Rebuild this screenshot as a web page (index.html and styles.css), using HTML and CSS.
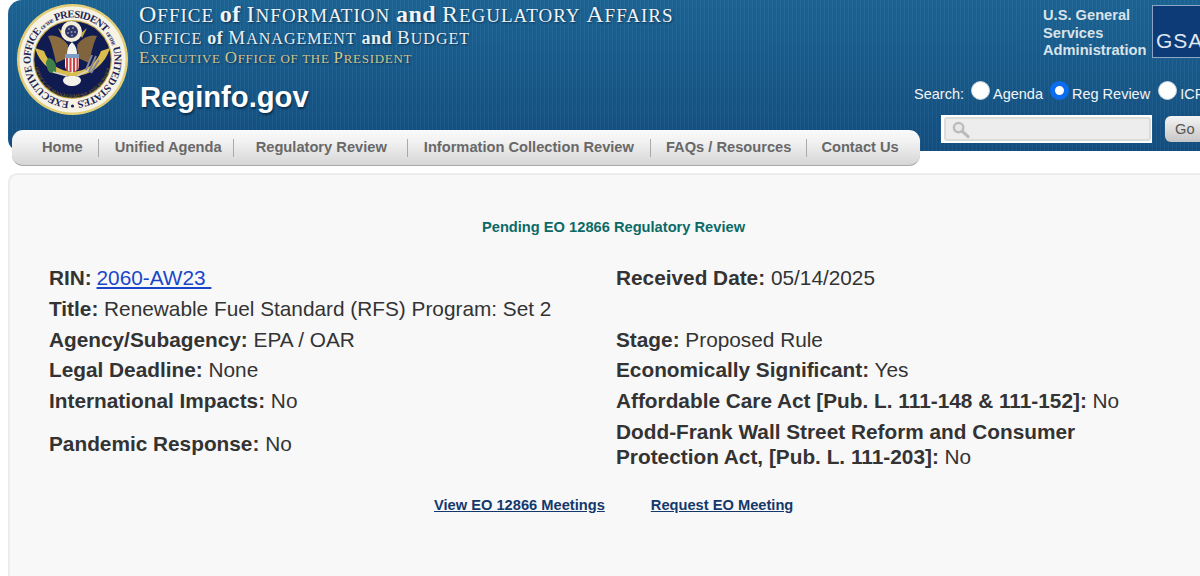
FILE: index.html
```html
<!DOCTYPE html>
<html lang="en">
<head>
<meta charset="utf-8">
<title>Reginfo.gov</title>
<link rel="stylesheet" href="styles.css">
</head>
<body>
<header class="banner">
  <div class="brand">
    <svg class="seal" viewBox="0 0 111 111" aria-label="Seal of the Executive Office of the President">
      <defs>
        <path id="ringText" d="M53 97.400A42 42 0 1 1 58 97.400"/>
        <path id="bandText" d="M17 55.500A38.500 38.500 0 0 0 94 55.500"/>
      </defs>
      <circle cx="55.500" cy="55.500" r="55.500" fill="#e3cf78"/>
      <circle cx="55.500" cy="55.500" r="53" fill="#f6f3e6"/>
      <text class="seal-ring"><textPath href="#ringText" startOffset="1" textLength="255">EXECUTIVE OFFICE <tspan class="seal-small">OF THE</tspan> PRESIDENT <tspan class="seal-small">OF THE</tspan> UNITED STATES</textPath></text>
      <circle cx="55.500" cy="102" r="1.600" fill="#1a2050"/>
      <circle cx="55.500" cy="55.500" r="39.500" fill="#c9ad4c"/>
      <circle cx="55.500" cy="55.500" r="38.300" fill="#101b52"/>
      <path d="M18 44A39 39 0 0 0 93 44L84 47A30 30 0 0 1 27 47Z" fill="#d8bc4e"/>
      <text class="seal-band"><textPath href="#bandText" startOffset="8" textLength="104">OFFICE OF MANAGEMENT AND BUDGET</textPath></text>
      <path d="M41 24L48 30L46 34ZM70 24L63 30L65 34Z" fill="#c7a847"/>
      <path d="M31 32C38 30 46 34 51 41L50 54L39 59C37 50 35 40 31 32Z" fill="#8a6b40"/>
      <path d="M80 32C73 30 65 34 60 41L61 54L72 59C74 50 76 40 80 32Z" fill="#80643d"/>
      <circle cx="54.500" cy="27.500" r="10.500" fill="#f3efdc"/>
      <circle cx="54.500" cy="27.500" r="6.500" fill="#2d3464"/>
      <g fill="#8f93b4"><circle cx="52" cy="25" r="1"/><circle cx="56" cy="24" r="1"/><circle cx="58" cy="28" r="1"/><circle cx="54.500" cy="28" r="1"/><circle cx="51" cy="29" r="1"/><circle cx="55" cy="31.500" r="1"/></g>
      <path d="M50 50C50 44 52 41 55 38C58 41 60 44 60 50Z" fill="#f4f4f0"/>
      <path d="M48 50H62V62C62 66 58 67 55 69C52 67 48 66 48 62Z" fill="#f1eee8"/>
      <path d="M48 50H62V54H48Z" fill="#7b9fc4"/>
      <path d="M49 54H51V66.500H49ZM52.500 54H54.500V68H52.500ZM56 54H58V68H56ZM59.500 54H61.500V66H59.500Z" fill="#c9434b"/>
      <path d="M32 54C37 55 40 60 39 68C35 71 30 68 30 62C28 60 29 56 32 54Z" fill="#3d7f46"/>
      <path d="M36 68L50 72" stroke="#d5d3c8" stroke-width="1.500"/>
      <path d="M60 72L72 66" stroke="#d5d3c8" stroke-width="1.500"/>
      <path d="M72 68L79 52M69 66L75 51M74 69L82 56" stroke="#85869c" stroke-width="2"/>
      <path d="M46 76C47 72 51 72 55 72C59 72 63 72 64 76C64 80 59 82 55 82C51 82 46 80 46 76Z" fill="#f3f2ea"/>
    </svg>
    <div class="titles">
      <p class="title-main"><span class="w">Office</span> <span class="lc">of</span> <span class="w">Information</span> <span class="lc">and</span> <span class="w">Regulatory</span> <span class="w">Affairs</span></p>
      <p class="title-sub"><span class="w">Office</span> <span class="lc">of</span> <span class="w">Management</span> <span class="lc">and</span> <span class="w">Budget</span></p>
      <p class="title-exec"><span class="w">Executive</span> <span class="w">Office</span> <span class="sc">of the</span> <span class="w">President</span></p>
      <p class="site-name">Reginfo.gov</p>
    </div>
  </div>
  <div class="tools">
    <div class="gsa">
      <span class="gsa-name">U.S. General<br>Services<br>Administration</span>
      <span class="gsa-logo">GSA</span>
    </div>
    <form class="search-types">
      <span>Search:</span>
      <label class="choice"><input type="radio" name="scope" class="radio">Agenda</label>
      <label class="choice"><input type="radio" name="scope" class="radio" checked>Reg Review</label>
      <label class="choice"><input type="radio" name="scope" class="radio">ICR</label>
    </form>
    <div class="search-box">
      <div class="search-field">
        <input type="text" class="search-input" aria-label="Search">
        <svg class="search-icon" viewBox="0 0 20 20"><circle cx="8" cy="8" r="5" fill="#e8e8e8" stroke="#bbb" stroke-width="2.500"/><path d="M12 12L18 17.500" stroke="#bbb" stroke-width="3.200" stroke-linecap="round"/></svg>
      </div>
      <button type="button" class="go">Go</button>
    </div>
  </div>
  <nav class="nav">
    <a class="nav-home">Home</a>
    <a class="nav-agenda">Unified Agenda</a>
    <a class="nav-review">Regulatory Review</a>
    <a class="nav-info">Information Collection Review</a>
    <a class="nav-faq">FAQs / Resources</a>
    <a class="nav-contact">Contact Us</a>
  </nav>
</header>
<main class="panel">
  <h1 class="heading">Pending EO 12866 Regulatory Review</h1>
  <div class="facts">
    <div><b>RIN:</b> <a class="rin" href="#">2060-AW23&nbsp;</a></div>
    <div><b>Received Date:</b> 05/14/2025</div>
    <div><b>Title:</b> Renewable Fuel Standard (RFS) Program: Set 2</div>
    <div></div>
    <div><b>Agency/Subagency:</b> EPA / OAR</div>
    <div><b>Stage:</b> Proposed Rule</div>
    <div><b>Legal Deadline:</b> None</div>
    <div><b>Economically Significant:</b> Yes</div>
    <div><b>International Impacts:</b> No</div>
    <div><b>Affordable Care Act [Pub. L. 111-148 &amp; 111-152]:</b> No</div>
    <div class="fact-mid"><b>Pandemic Response:</b> No</div>
    <div class="fact-wrap"><b>Dodd-Frank Wall Street Reform and Consumer Protection Act, [Pub. L. 111-203]:</b> No</div>
  </div>
  <div class="links">
    <a href="#">View EO 12866 Meetings</a>
    <a href="#">Request EO Meeting</a>
  </div>
</main>
</body>
</html>
```
FILE: styles.css
```css
* { box-sizing: border-box; }
html, body { margin: 0; height: 576px; overflow: hidden; background: #fff; }
body { font-family: "Liberation Sans", Arial, sans-serif; color: #333; }
p { margin: 0; }

.banner {
  margin-left: 8px;
  height: 151px;
  display: grid;
  grid-template-columns: 906px 286px;
  grid-template-rows: 130px 21px;
  border-radius: 14px 0 0 12px;
  background:
    repeating-linear-gradient(90deg, rgba(255,255,255,.045) 0 1px, rgba(0,0,0,.02) 1px 2px, transparent 2px 4px),
    linear-gradient(#1b6393, #134e7f);
}
.brand { display: flex; align-items: flex-start; }
.seal { width: 111px; height: 111px; margin: 4px 0 0 9px; flex: none; }
.seal-ring { font: bold 10.500px "Liberation Serif", serif; fill: #1c2355; }
.seal-small { font-size: 5px; }
.seal-band { font: bold 5px "Liberation Serif", serif; fill: #6b5a1c; }
.titles { margin-left: 11px; }
.title-main, .title-sub, .title-exec { font-family: "Liberation Serif", serif; white-space: nowrap; }
.w { display: inline-block; text-transform: uppercase; }
.lc { font-weight: bold; }
.sc { text-transform: uppercase; }
.title-main { margin-top: 2px; font-size: 19px; line-height: 25px; letter-spacing: 1px; color: #f1f4f6; text-shadow: 1px 1px 2px #0b3354; }
.title-main .w::first-letter { font-size: 24px; }
.title-main .lc { font-size: 24px; letter-spacing: .5px; }
.title-sub { font-size: 16px; line-height: 20px; letter-spacing: 1px; color: #e8eef2; text-shadow: 1px 1px 2px #0b3354; }
.title-sub .w::first-letter { font-size: 19px; }
.title-sub .lc { font-size: 18px; letter-spacing: .5px; }
.title-exec { font-size: 13px; line-height: 18px; letter-spacing: .7px; color: #cfc68e; text-shadow: 1px 1px 2px #0b3354; }
.title-exec .w::first-letter { font-size: 17px; }
.site-name { margin: 11px 0 0 1px; font-weight: bold; font-size: 29.200px; line-height: 36px; color: #fff; text-shadow: 1px 2px 2px #0a2f4e; }

.tools { grid-row: 1 / 3; grid-column: 2; overflow: hidden; white-space: nowrap; color: #fff; }
.gsa { display: flex; padding: 5px 0 0 129px; width: 400px; }
.gsa-name { margin-top: 2px; width: 109px; font-weight: bold; font-size: 14.670px; line-height: 17.500px; color: #d9e3ea; }
.gsa-logo { width: 60px; height: 53px; padding: 23px 0 0 3px; border: 1px solid #8aa6c2; background: #0d3b78; font-size: 21px; line-height: 24px; letter-spacing: 1px; color: #dfe8f0; }
.search-types { display: flex; align-items: center; width: 400px; height: 20px; margin-top: 24px; font-size: 14.500px; color: #f2f5f7; }
.choice { display: flex; align-items: center; }
.radio { appearance: none; width: 19px; height: 19px; margin: -6px 3px 0 7px; border-radius: 50%; background: #fff; border: 1px solid #c8d4dc; }
.radio:checked { background: #fff; border: 5px solid #0b6cf0; }
.choice + .choice + .choice .radio { margin-left: 8px; }
.search-box { display: flex; align-items: center; margin: 11px 0 0 27px; width: 400px; }
.search-field { position: relative; width: 211px; height: 28px; padding: 2px 1px 2px 3px; background: #fff; }
.search-input { display: block; width: 100%; height: 100%; padding: 0; border: 2px solid #dcdcd8; border-radius: 3px; background: #ededed; }
.search-icon { position: absolute; left: 10px; top: 5px; width: 19px; height: 19px; }
.go { margin-left: 13px; width: 50px; height: 26px; padding: 0 0 0 10px; text-align: left; border: 0; border-radius: 6px; background: linear-gradient(#f4f4f4, #c6c6c6); font: 14.670px "Liberation Sans", sans-serif; color: #555; }

.nav {
  grid-row: 2; grid-column: 1;
  position: relative;
  margin-left: 4px;
  width: 908px;
  height: 36px;
  display: flex;
  align-items: center;
  border-radius: 11px;
  border-bottom: 1px solid #a9a9a9;
  background: linear-gradient(#fafafa, #f1f1f1 35%, #d6d6d6);
  font-weight: bold;
  font-size: 14.670px;
  color: #686868;
  white-space: nowrap;
}
.nav a { display: block; height: 18px; line-height: 16px; }
.nav a + a { border-left: 1px solid #aaa; }
.nav-home { padding: 0 15px 0 30px; }
.nav-agenda { padding: 0 11px 0 16px; }
.nav-review { padding: 0 20px 0 22px; }
.nav-info { padding: 0 16px; }
.nav-faq { padding: 0 15px; }
.nav-contact { padding: 0 0 0 14px; }

.panel {
  margin: 22px 0 0 8px;
  height: 403px;
  padding-top: 44px;
  border: 2px solid #ececec;
  border-width: 2px 0 0 2px;
  border-radius: 9px 0 0 0;
  background: #f8f8f9;
}
.heading { margin: 0 0 28px 17px; text-align: center; font-size: 14.670px; line-height: 16px; font-weight: bold; color: #0c6a66; }
.facts { display: grid; grid-template-columns: 567px 520px; margin-left: 39px; font-size: 20.800px; line-height: 30.750px; }
.facts b { color: #333; }
.rin { margin-left: -1px; color: #1a46c9; }
.fact-mid { align-self: center; padding-top: 4px; }
.fact-wrap { line-height: 25px; padding-top: 2px; }
.links { display: flex; margin: 26px 0 0 424px; gap: 46px; font-weight: bold; font-size: 14.670px; line-height: 20px; }
.links a { color: #14386b; }
```
